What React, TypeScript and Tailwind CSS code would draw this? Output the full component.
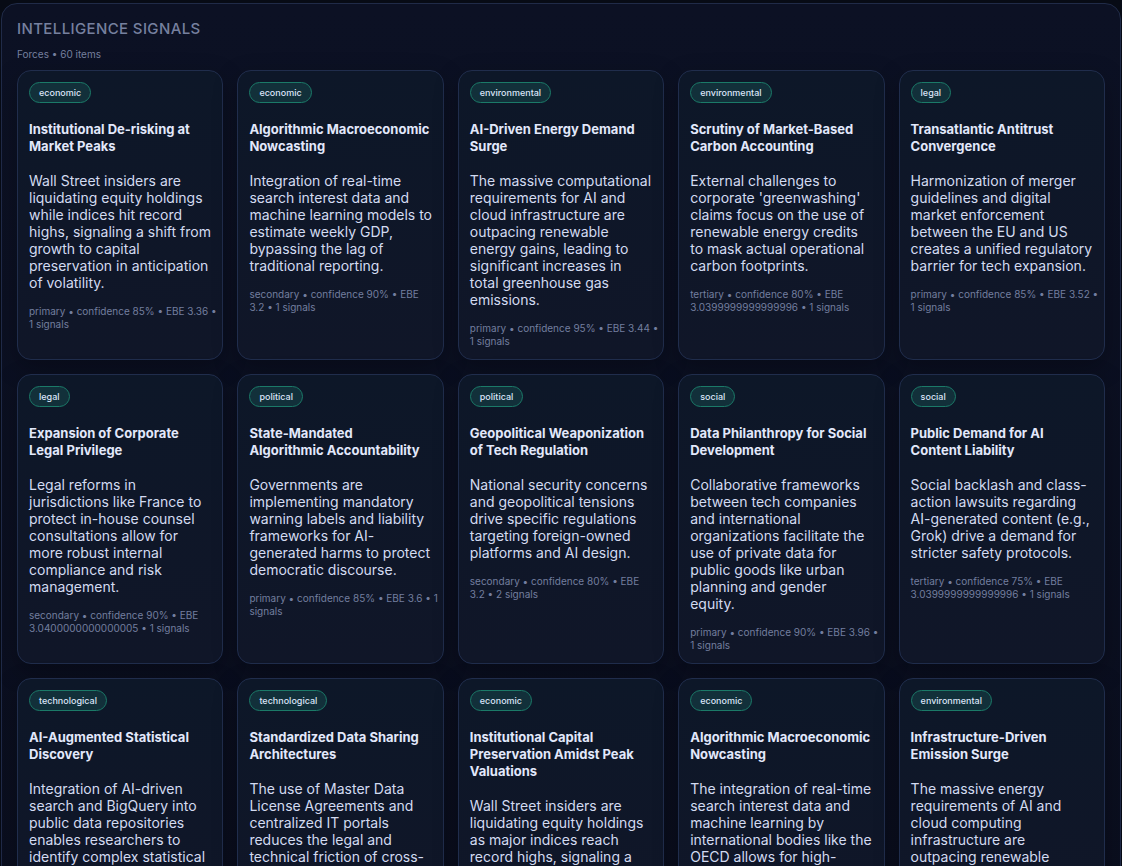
import React from 'react';

interface Signal {
  category: string;
  title: string;
  summary: string;
  meta: string;
}

const signals: Signal[] = [
  {
    category: 'economic',
    title: 'Institutional De-risking at Market Peaks',
    summary:
      'Wall Street insiders are liquidating equity holdings while indices hit record highs, signaling a shift from growth to capital preservation in anticipation of volatility.',
    meta: 'primary • confidence 85% • EBE 3.36 • 1\u00a0signals',
  },
  {
    category: 'economic',
    title: 'Algorithmic Macroeconomic Nowcasting',
    summary:
      'Integration of real-time search interest data and machine learning models to estimate weekly GDP, bypassing the lag of traditional reporting.',
    meta: 'secondary • confidence 90% • EBE 3.2\u00a0•\u00a01\u00a0signals',
  },
  {
    category: 'environmental',
    title: 'AI-Driven Energy Demand Surge',
    summary:
      'The massive computational requirements for AI and cloud infrastructure are outpacing renewable energy gains, leading to significant increases in total greenhouse gas emissions.',
    meta: 'primary • confidence 95% • EBE 3.44 • 1\u00a0signals',
  },
  {
    category: 'environmental',
    title: 'Scrutiny of Market-Based Carbon Accounting',
    summary:
      "External challenges to corporate 'greenwashing' claims focus on the use of renewable energy credits to mask actual operational carbon footprints.",
    meta: 'tertiary • confidence 80% • EBE 3.0399999999999996 • 1 signals',
  },
  {
    category: 'legal',
    title: 'Transatlantic Antitrust Convergence',
    summary:
      'Harmonization of merger guidelines and digital market enforcement between the EU and US creates a unified regulatory barrier for tech expansion.',
    meta: 'primary • confidence 85% • EBE 3.52 • 1\u00a0signals',
  },
  {
    category: 'legal',
    title: 'Expansion of Corporate Legal Privilege',
    summary:
      'Legal reforms in jurisdictions like France to protect in-house counsel consultations allow for more robust internal compliance and risk management.',
    meta: 'secondary • confidence 90% • EBE 3.0400000000000005 • 1 signals',
  },
  {
    category: 'political',
    title: 'State-Mandated Algorithmic\u00a0Accountability',
    summary:
      'Governments are implementing mandatory warning labels and liability frameworks for AI-generated harms to protect democratic discourse.',
    meta: 'primary • confidence 85% • EBE 3.6 • 1 signals',
  },
  {
    category: 'political',
    title: 'Geopolitical Weaponization of Tech Regulation',
    summary:
      'National security concerns and geopolitical tensions drive specific regulations targeting foreign-owned platforms and AI design.',
    meta: 'secondary • confidence 80% • EBE 3.2\u00a0•\u00a02\u00a0signals',
  },
  {
    category: 'social',
    title: 'Data Philanthropy for Social Development',
    summary:
      'Collaborative frameworks between tech companies and international organizations facilitate the use of private data for public goods like urban planning and gender equity.',
    meta: 'primary • confidence 90% • EBE 3.96 • 1\u00a0signals',
  },
  {
    category: 'social',
    title: 'Public Demand for AI Content Liability',
    summary:
      'Social backlash and class-action lawsuits regarding AI-generated content (e.g., Grok) drive a demand for stricter safety protocols.',
    meta: 'tertiary • confidence 75% • EBE 3.0399999999999996 • 1 signals',
  },
  {
    category: 'technological',
    title: 'AI-Augmented Statistical Discovery',
    summary:
      'Integration of AI-driven search and BigQuery into public data repositories enables researchers to identify complex statistical',
    meta: 'primary • confidence 90% • EBE 3.6 • 1 signals',
  },
  {
    category: 'technological',
    title: 'Standardized Data Sharing Architectures',
    summary:
      'The use of Master Data License Agreements and centralized IT portals reduces the legal and technical friction of cross-',
    meta: 'secondary • confidence 85% • EBE 3.2 • 1 signals',
  },
  {
    category: 'economic',
    title: 'Institutional Capital Preservation Amidst Peak Valuations',
    summary:
      'Wall Street insiders are liquidating equity holdings as major indices reach record highs, signaling a',
    meta: 'primary • confidence 85% • EBE 3.36 • 1 signals',
  },
  {
    category: 'economic',
    title: 'Algorithmic Macroeconomic Nowcasting',
    summary:
      'The integration of real-time search interest data and machine learning by international bodies like the OECD allows for high-',
    meta: 'secondary • confidence 90% • EBE 3.2 • 1 signals',
  },
  {
    category: 'environmental',
    title: 'Infrastructure-Driven Emission Surge',
    summary:
      'The massive energy requirements of AI and cloud computing infrastructure are outpacing renewable',
    meta: 'primary • confidence 95% • EBE 3.44 • 1 signals',
  },
];

const SignalCard: React.FC<{ signal: Signal }> = ({ signal }) => (
  <article className="rounded-[14px] border border-[#202d4c] bg-linear-to-b from-[#0d1728] to-[#101628] p-[11px] shadow-[0_8px_24px_rgba(0,0,0,0.25)]">
    <span className="block w-fit rounded-full border border-[#1b7a68] bg-[#12303a] px-[9px] text-[9px] leading-[19px] font-medium text-[#dbe4f8]">
      {signal.category}
    </span>
    <h3 className="mt-[18px] text-[13px] leading-[17px] font-bold text-[#e2e8fb]">{signal.title}</h3>
    <p className="mt-[17px] -mr-px text-[14px] leading-[17px] text-[#d3dbf1]">{signal.summary}</p>
    <p className="mt-[14px] -mr-2 text-[10px] leading-[13px] text-[#737e9f]">{signal.meta}</p>
  </article>
);

const App: React.FC = () => {
  return (
    <div className="h-screen overflow-hidden bg-[#070b15] px-px pt-[3px] font-['Inter','Liberation_Sans',sans-serif]">
      <section className="rounded-[16px] border border-[#202b48] bg-linear-to-b from-[#0c1124] to-[#0a0e1e] p-[15px]">
        <h2 className="text-[15px] leading-[20px] font-medium tracking-wide uppercase text-[#76809f]">Intelligence Signals</h2>
        <p className="mt-[9px] text-[10px] leading-[13px] text-[#76809f]">Forces • 60 items</p>
        <div className="mt-[9px] grid grid-cols-5 gap-[14px]">
          {signals.map((signal, i) => (
            <SignalCard key={i} signal={signal} />
          ))}
        </div>
      </section>
    </div>
  );
};

export default App;
